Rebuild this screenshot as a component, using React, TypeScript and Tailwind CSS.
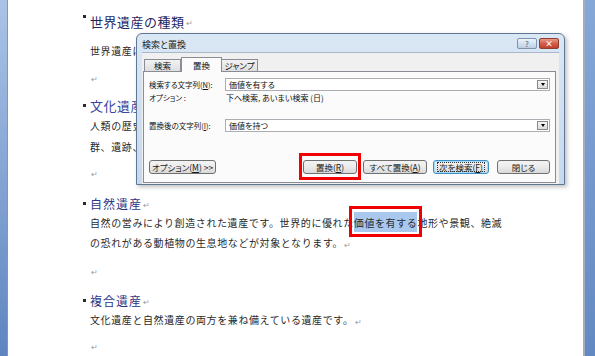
import React from 'react';

const Ret = () => (
  <span className="self-end mb-[3px] ml-[1px] text-[8px] leading-none text-[#9a9a9a]">↵</span>
);

const Bullet = ({ top }: { top?: boolean }) => (
  <span className={`w-[3px] h-[3px] bg-[#2a2a2a] mr-[4px] shrink-0 ${top ? 'self-start mt-[2px]' : ''}`} />
);

const Body = ({ children, mt }: { children: React.ReactNode; mt: string }) => (
  <div className={`h-[20px] flex items-center whitespace-nowrap text-[10px] tracking-[0.6px] text-[#2a2a2a] ${mt}`}>
    {children}
  </div>
);

const Empty = ({ mt }: { mt: string }) => (
  <div className={`h-[20px] flex items-center ${mt}`}>
    <span className="text-[8px] leading-none text-[#9a9a9a] pl-[1px] mt-[2px]">↵</span>
  </div>
);

const Btn = ({ children, w, focus }: { children: React.ReactNode; w: string; focus?: boolean }) => (
  <div
    className={`${w} h-[14px] rounded-[3px] border flex items-center justify-center whitespace-nowrap text-[8.5px] leading-none text-[#1a1a1a] bg-gradient-to-b from-[#f3f3f3] via-[#ebebeb] to-[#d9d9d9] ${
      focus ? 'border-[#3c8fc8] shadow-[inset_0_0_0_1px_#a7dcf7]' : 'border-[#707070]'
    }`}
  >
    {focus ? <span className="outline outline-1 outline-dotted outline-[#333] px-[1px]">{children}</span> : children}
  </div>
);

const Combo = ({ value }: { value: string }) => (
  <div className="flex-1 h-[13px] bg-white border border-[#abadb3] flex items-center pl-[3px] pr-[1px]">
    <span className="text-[8px] leading-none text-[#111] flex-1 whitespace-nowrap">{value}</span>
    <span className="w-[11px] h-[9px] border border-[#8a8a8a] bg-gradient-to-b from-[#f6f6f6] to-[#dcdcdc] flex items-center justify-center">
      <span className="w-0 h-0 border-l-[2.5px] border-r-[2.5px] border-t-[3px] border-l-transparent border-r-transparent border-t-black" />
    </span>
  </div>
);

const Label = ({ children, w }: { children: React.ReactNode; w: string }) => (
  <span className={`${w} shrink-0 whitespace-nowrap text-[7.5px] leading-none text-[#111]`}>{children}</span>
);

const Dialog = () => (
  <div className="absolute left-[136px] top-[33px] w-[429px] h-[152px] rounded-t-[6px] border border-[#5f7694] bg-gradient-to-b from-[#dae7f5] to-[#c6d9ee] shadow-[2px_2px_4px_rgba(0,0,0,0.25)] flex flex-col font-['Noto_Sans_CJK_JP',sans-serif] [font-feature-settings:'palt']">
    <div className="h-[18px] flex items-start pt-[4px] pl-[5px] pr-[5px]">
      <span className="text-[9px] leading-none text-[#1b1b1b] mt-[2px]">検索と置換</span>
      <div className="ml-auto flex gap-[2px]">
        <div className="w-[20px] h-[11px] rounded-[2px] border border-[#7f93ad] bg-gradient-to-b from-[#eef3fa] to-[#bccfe6] flex items-center justify-center text-[8px] leading-none text-[#4a5a70]">
          ?
        </div>
        <div className="w-[20px] h-[11px] rounded-[2px] border border-[#8f3d2e] bg-gradient-to-b from-[#e89a88] via-[#d0604a] to-[#c0402a] flex items-center justify-center text-[8px] font-bold leading-none text-white">
          ×
        </div>
      </div>
    </div>
    <div className="flex-1 mx-[5px] bg-[#f0f0f0] border-t border-[#a9b8c9] pt-[3px] pl-[1px] pr-[3px] flex flex-col">
      <div className="h-[15px] flex items-end pl-[1px] relative z-10">
        <div className="w-[37px] h-[12px] border border-b-0 border-[#898c95] bg-gradient-to-b from-[#f2f2f2] to-[#dedede] flex items-center justify-center text-[8.5px] leading-none text-[#111]">
          検索
        </div>
        <div className="w-[41px] h-[15px] -mb-[1px] border border-b-0 border-[#898c95] bg-[#fbfbfb] flex items-center justify-center text-[8.5px] leading-none text-[#111]">
          置換
        </div>
        <div className="w-[36px] h-[12px] border border-b-0 border-l-0 border-[#898c95] bg-gradient-to-b from-[#f2f2f2] to-[#dedede] flex items-center justify-center text-[8.5px] leading-none text-[#111]">
          ジャンプ
        </div>
      </div>
      <div className="h-[112px] border border-[#898c95] bg-[#fbfbfb] pt-[6px] px-[5px] flex flex-col">
        <div className="flex items-center">
          <Label w="w-[76px]">
            検索する文字列(<u>N</u>):
          </Label>
          <Combo value="価値を有する" />
        </div>
        <div className="flex items-center h-[11px] mt-[1px]">
          <Label w="w-[77px]">オプション :</Label>
          <span className="text-[8px] leading-none text-[#111] whitespace-nowrap">下へ検索, あいまい検索 (日)</span>
        </div>
        <div className="flex items-center mt-[16px]">
          <Label w="w-[76px]">
            置換後の文字列(<u>I</u>):
          </Label>
          <Combo value="価値を持つ" />
        </div>
        <div className="flex items-center mt-[28px]">
          <Btn w="w-[67px]">
            オプション(<u>M</u>) &gt;&gt;
          </Btn>
          <div className="ml-auto flex items-center">
            <div className="relative">
              <Btn w="w-[54px]">
                置換(<u>R</u>)
              </Btn>
              <span className="absolute -left-[4px] -right-[4px] -top-[7px] -bottom-[6px] border-[3px] border-[#f00000]" />
            </div>
            <div className="ml-[6px]">
              <Btn w="w-[64px]">
                すべて置換(<u>A</u>)
              </Btn>
            </div>
            <div className="ml-[6px]">
              <Btn w="w-[56px]" focus>
                次を検索(<u>F</u>)
              </Btn>
            </div>
            <div className="ml-[8px]">
              <Btn w="w-[53px]">閉じる</Btn>
            </div>
          </div>
        </div>
      </div>
    </div>
  </div>
);

export default function App() {
  return (
    <div className="relative w-[595px] h-[356px] overflow-hidden flex font-['Noto_Sans_CJK_JP',sans-serif]">
      <div className="w-[8px] bg-gradient-to-b from-[#aac4e6] to-[#5f85c0] border-r border-[#8796ac]" />
      <div className="flex-1 bg-white pl-[82px] pt-[13px] flex flex-col">
        <div className="h-[18px] flex items-center -ml-[7px] whitespace-nowrap">
          <Bullet top />
          <span className="text-[13px] tracking-[0.5px] leading-none text-[#1f2664]">世界遺産の種類</span>
          <Ret />
        </div>
        <Body mt="mt-[10px]">世界遺産は大きく3つの種類に分類されています。</Body>
        <Empty mt="mt-[9px]" />
        <div className="h-[18px] flex items-center -ml-[7px] whitespace-nowrap mt-[9px]">
          <Bullet />
          <span className="text-[13px] tracking-[0.5px] leading-none text-[#3a45a0]">文化遺産</span>
          <Ret />
        </div>
        <Body mt="mt-[2px]">人類の歴史上重要な時代を例証する建築物や記念碑、建造物</Body>
        <Body mt="mt-[1px]">群、遺跡、文化的景観などが対象となります。</Body>
        <Empty mt="mt-[8px]" />
        <div className="h-[18px] flex items-center -ml-[7px] whitespace-nowrap mt-[12px]">
          <Bullet />
          <span className="text-[12px] tracking-[1px] leading-none text-[#2d3785]">自然遺産</span>
          <Ret />
        </div>
        <Body mt="mt-0">
          自然の営みにより創造された遺産です。世界的に優れた
          <span className="relative h-[20px] flex items-center bg-[#a8c8ee]">
            価値を有する
            <span className="absolute -left-[5px] -right-[5px] -top-[6px] -bottom-[5px] border-[3px] border-[#f00000]" />
          </span>
          地形や景観、絶滅
        </Body>
        <Body mt="mt-0">
          の恐れがある動植物の生息地などが対象となります。
          <Ret />
        </Body>
        <Empty mt="mt-[10px]" />
        <div className="h-[18px] flex items-center -ml-[7px] whitespace-nowrap mt-[11px]">
          <Bullet />
          <span className="text-[12px] tracking-[1px] leading-none text-[#2d3785]">複合遺産</span>
          <Ret />
        </div>
        <Body mt="mt-0">
          文化遺産と自然遺産の両方を兼ね備えている遺産です。
          <Ret />
        </Body>
        <Empty mt="mt-[8px]" />
      </div>
      <div className="w-[12px] border-l-2 border-[#a3adbd] bg-gradient-to-b from-[#86a8d8] to-[#6389c4]" />
      <Dialog />
    </div>
  );
}
